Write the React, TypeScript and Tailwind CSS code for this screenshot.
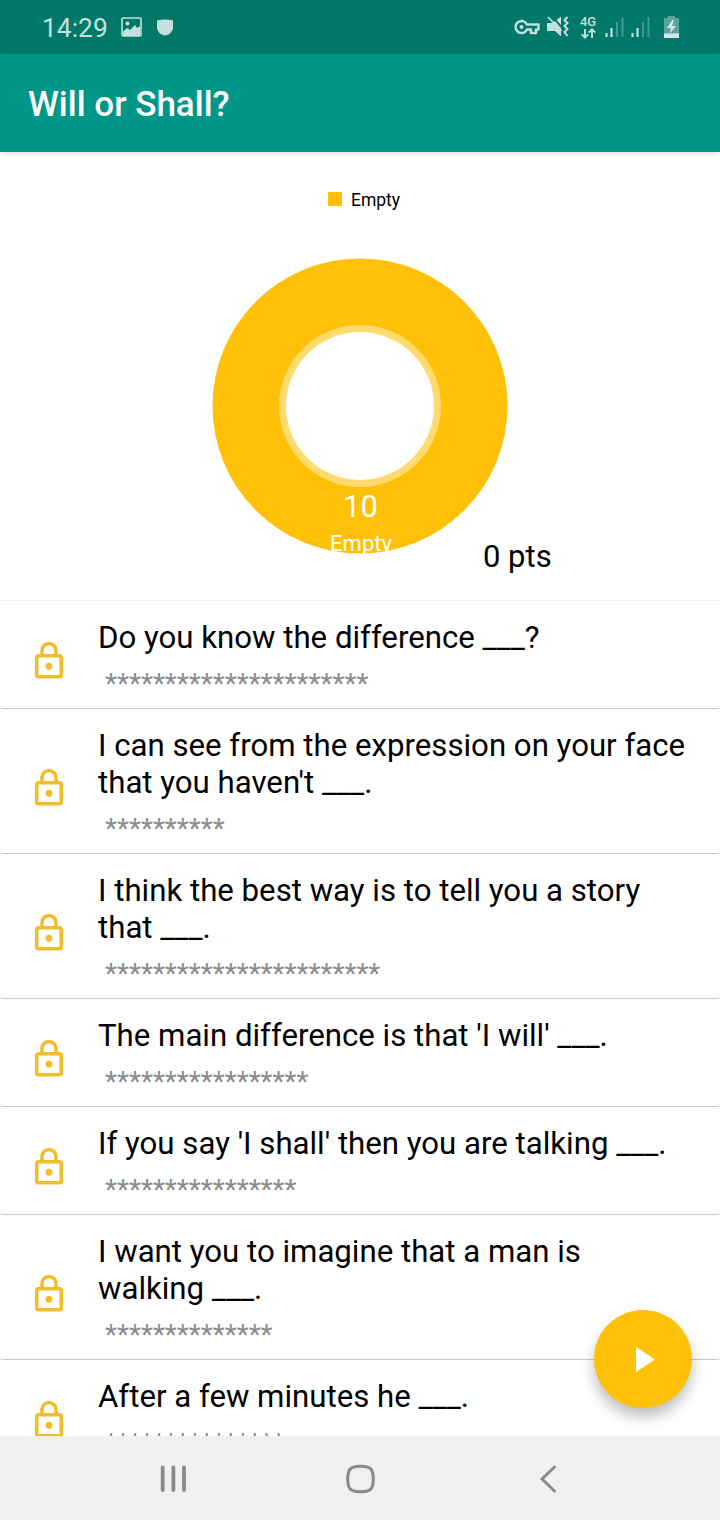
import React from 'react'

const questions = [
    { lines: ['Do you know the difference ___?'], stars: 22 },
    { lines: ['I can see from the expression on your face', "that you haven't ___."], stars: 10 },
    { lines: ['I think the best way is to tell you a story', 'that ___.'], stars: 23 },
    { lines: ["The main difference is that 'I will' ___."], stars: 17 },
    { lines: ["If you say 'I shall' then you are talking ___."], stars: 16 },
    { lines: ['I want you to imagine that a man is', 'walking ___.'], stars: 14 },
    { lines: ['After a few minutes he ___.'], stars: 15 },
]

const Signal = () => (
    <svg width="20" height="22" viewBox="0 0 20 22">
        <path d="M1.5 17v4M6.5 12v9" stroke="#d5eae7" strokeWidth="2" />
        <path d="M12 6v15M17.500 1v20" stroke="#45988e" strokeWidth="2" />
    </svg>
)

const StatusBar = () => (
    <div className="flex h-[54px] items-center bg-[#00796b] pl-[42px] pr-[41px] text-[#c5e0dd]">
        <p className="w-[65px] pt-[3px] text-[26.4px] leading-none">14:29</p>
        <svg className="ml-[14px]" width="21" height="20" viewBox="0 0 21 20">
            <rect x="1" y="1" width="19" height="18" rx="1" fill="none" stroke="currentColor" strokeWidth="1.600" />
            <circle cx="6.5" cy="6.5" r="2" fill="currentColor" />
            <path d="M2 14.500l4-3.500 3 2 5-5 2 3 3-2v10H2z" fill="currentColor" />
        </svg>
        <svg className="ml-[15px]" width="16" height="17" viewBox="0 0 16 17">
            <path d="M0 1.500Q8-.500 16 1.500v7c0 4-4 8-8 8S0 12.500 0 8.500z" fill="currentColor" />
        </svg>
        <div className="ml-auto flex items-center">
            <svg width="26" height="16" viewBox="0 0 26 16">
                <path
                    d="M13 5.500a6 6 0 1 0 0 5h4v3.500h5v-3.500h2.500v-5z"
                    fill="none"
                    stroke="currentColor"
                    strokeWidth="2.400"
                    strokeLinejoin="round"
                />
                <circle cx="7.500" cy="8" r="2" fill="currentColor" />
            </svg>
            <svg className="ml-[7px]" width="22" height="22" viewBox="0 0 22 22">
                <path d="M0 7h5l3-2 6 7v8.500l-6-5.500H0zM9.500 4L14 .500V9z" fill="currentColor" />
                <path d="M1 1l13.500 14" stroke="currentColor" strokeWidth="1.800" />
                <path d="M20.500 1l-3 3 3 3-3 3 3 3-3 3 3 4" fill="none" stroke="currentColor" strokeWidth="2" />
            </svg>
            <div className="ml-[11px] flex w-4 flex-col items-center">
                <p className="text-[13px] leading-[12px] font-medium">4G</p>
                <svg width="15" height="11" viewBox="0 0 15 11">
                    <path
                        d="M4 1v8.500M.700 6.300L4 9.600l3.300-3.300M11 10V1.500M7.700 4.700L11 1.400l3.300 3.300"
                        fill="none"
                        stroke="currentColor"
                        strokeWidth="1.900"
                    />
                </svg>
            </div>
            <div className="ml-[9px] flex gap-[6px]">
                <Signal />
                <Signal />
            </div>
            <svg className="ml-[13px]" width="15" height="22" viewBox="0 0 15 22">
                <path d="M4 0h7v2h4v20H0V2h4z" fill="#5da59c" />
                <path d="M0 17.500h15V22H0z" fill="#d5eae7" />
                <path d="M8.500 4L3 12h4l-1.500 6L12 10H8l2-6z" fill="#d5eae7" />
            </svg>
        </div>
    </div>
)

const Chart = () => (
    <div className="relative h-[448px]">
        <div className="flex items-center pt-[36px] pl-[328px]">
            <div className="mb-[2px] h-[14px] w-[14px] bg-[#ffc107]" />
            <p className="ml-[9px] text-[17.5px] leading-[24px]">Empty</p>
        </div>
        <svg className="absolute top-[100px] left-[210px]" width="300" height="310" viewBox="0 0 300 310">
            <circle cx="150" cy="154" r="147.500" fill="#ffc107" />
            <circle cx="150" cy="154" r="81" fill="#fff" fillOpacity="0.42" />
            <circle cx="150" cy="154" r="74" fill="#fff" />
            <text x="150.500" y="265" fontSize="31" fill="#fff" textAnchor="middle">10</text>
            <text x="151" y="299" fontSize="22" fill="#fff" textAnchor="middle">Empty</text>
        </svg>
        <p className="absolute top-[386px] left-[483px] text-[31px] leading-[37px]">0 pts</p>
    </div>
)

const Lock = () => (
    <svg className="mt-[13px] shrink-0" width="42" height="42" viewBox="0 0 24 24">
        <rect x="5" y="9" width="14" height="12" rx="1" fill="none" stroke="#f0bd2b" strokeWidth="2" />
        <path d="M8 9V6a4 4 0 0 1 8 0v3" fill="none" stroke="#f0bd2b" strokeWidth="2" />
        <circle cx="12" cy="15" r="2" fill="#f0bd2b" />
    </svg>
)

const App = () => {
    return (
        <div className="flex h-[1520px] w-[720px] flex-col overflow-hidden bg-white font-[Roboto,sans-serif] text-black">
            <StatusBar />
            <div className="z-10 flex h-[98px] shrink-0 items-center bg-[#009688] pt-[4px] pl-[28px] shadow-[0_2px_5px_rgba(0,0,0,0.12)]">
                <h1 className="text-[35px] font-medium text-white">Will or Shall?</h1>
            </div>
            <div className="relative h-[1284px] shrink-0 overflow-hidden">
                <Chart />
                <div className="border-t border-[#f0f0f0]">
                    {questions.map((q) => (
                        <div
                            key={q.lines[0]}
                            className="group flex items-center rounded-[3px] border-b border-[#c8c8c8] pl-[28px]"
                        >
                            <Lock />
                            <div className="pt-[18px] pb-[8px] pl-[28px] group-last:pb-[7px]">
                                {q.lines.map((line) => (
                                    <p key={line} className="text-[31.2px] leading-[37px] whitespace-nowrap">{line}</p>
                                ))}
                                <p className="mt-[11px] pl-[7px] text-[27.8px] leading-[33px] text-[#8c8c8c] group-last:mt-[12px]">
                                    {'*'.repeat(q.stars)}
                                </p>
                            </div>
                        </div>
                    ))}
                </div>
                <button className="absolute top-[1158px] left-[594px] flex h-[98px] w-[98px] items-center justify-center rounded-full bg-[#ffc107] shadow-[0_9px_14px_rgba(0,0,0,0.25)]">
                    <svg className="ml-[5px]" width="19" height="25" viewBox="0 0 19 25">
                        <path d="M0 0l19 12.500L0 25z" fill="#fff" />
                    </svg>
                </button>
            </div>
            <div className="flex h-[84px] shrink-0 items-center bg-[#f0f0f0] pt-[2px] pl-[160px] text-[#8a8a8a]">
                <svg width="27" height="28" viewBox="0 0 27 28">
                    <path d="M2.700 2.500v22.500M13.400 2.500v22.500M24 2.500v22.500" stroke="currentColor" strokeWidth="3.800" strokeLinecap="round" />
                </svg>
                <svg className="ml-[158px]" width="31" height="30" viewBox="0 0 30 30">
                    <path
                        d="M15 2.200c10 0 12.800 2.800 12.800 12.800S25 27.800 15 27.800 2.200 25 2.200 15 5 2.200 15 2.200z"
                        fill="none"
                        stroke="currentColor"
                        strokeWidth="3"
                    />
                </svg>
                <svg className="ml-[163px]" width="18" height="28" viewBox="0 0 18 28">
                    <path d="M15.500 2L3 14l12.500 12" fill="none" stroke="currentColor" strokeWidth="3" strokeLinecap="round" />
                </svg>
            </div>
        </div>
    )
}

export default App
